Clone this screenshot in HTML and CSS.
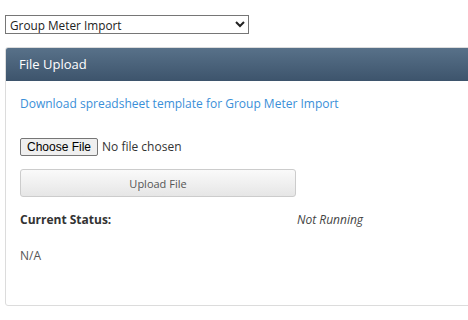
FILE: index.html
```html
<!DOCTYPE html>
<html lang="en">
<head>
    <meta charset="UTF-8">
    <title>Group Meter Import</title>
    <link rel="stylesheet" href="styles.css">
</head>
<body>

<select class="import-type">
    <option>Group Meter Import</option>
    <option>Meter Import</option>
</select>

<!-- File Upload Panel -->
<div class="panel">
    <div class="panel-heading">File Upload</div>
    <div class="panel-body">
        <a class="template-link" href="#">Download spreadsheet template for Group Meter Import</a>

        <input type="file" class="file-input">

        <button class="btn-upload">Upload File</button>

        <div class="status-row">
            <span class="status-label">Current Status:</span>
            <span class="status-value">Not Running</span>
        </div>

        <div class="status-result">N/A</div>
    </div>
</div>

</body>
</html>
```

FILE: styles.css
```css
html {
    overflow: hidden;
}

body {
    font-family: 'Open Sans', sans-serif;
    font-size: 12px;
    color: #333;
    margin: 0;
    padding: 15px 5px;
    background-color: #fff;
    overflow: hidden;
}

.import-type {
    display: block;
    width: 244px;
    height: 19px;
    padding: 0;
    font-family: 'Open Sans', sans-serif;
    font-size: 11.8px;
    color: #222;
    border: 1px solid #767676;
    border-radius: 0;
    background-color: #fff;
}

.panel {
    width: 480px;
    margin-top: 13px;
    border: 1px solid #dcdcdc;
    border-radius: 3px;
    background-color: #fff;
}

.panel-heading {
    height: 33px;
    line-height: 32px;
    padding: 0 13px;
    font-size: 13px;
    color: #fff;
    background: linear-gradient(to bottom, #587189, #3d546c);
    border-radius: 2px 2px 0 0;
}

.panel-body {
    display: flex;
    flex-direction: column;
    align-items: flex-start;
    padding: 14px 14px 0;
    height: 210px;
}

.template-link {
    color: #3a8fd8;
    text-decoration: none;
    line-height: 17px;
}

.file-input {
    margin-top: 26px;
    font-family: 'Open Sans', sans-serif;
    font-size: 12px;
    color: #333;
}

.file-input::file-selector-button {
    font-family: 'Liberation Sans', Arial, sans-serif;
    font-size: 12px;
    padding: 1px 6px;
    margin-right: 4px;
    border: 1px solid #767676;
    border-radius: 2px;
    background-color: #efefef;
}

.btn-upload {
    margin-top: 13px;
    width: 276px;
    height: 28px;
    font-family: 'Open Sans', sans-serif;
    font-size: 11px;
    color: #555;
    border: 1px solid #ccc;
    border-radius: 3px;
    background: linear-gradient(to bottom, #fafafa, #e6e6e6);
    cursor: pointer;
}

.status-row {
    display: grid;
    grid-template-columns: 277px auto;
    margin-top: 14px;
    line-height: 17px;
}

.status-label {
    font-weight: bold;
    color: #333;
}

.status-value {
    font-style: italic;
    color: #444;
}

.status-result {
    margin-top: 19px;
    color: #555;
    line-height: 17px;
}
```
